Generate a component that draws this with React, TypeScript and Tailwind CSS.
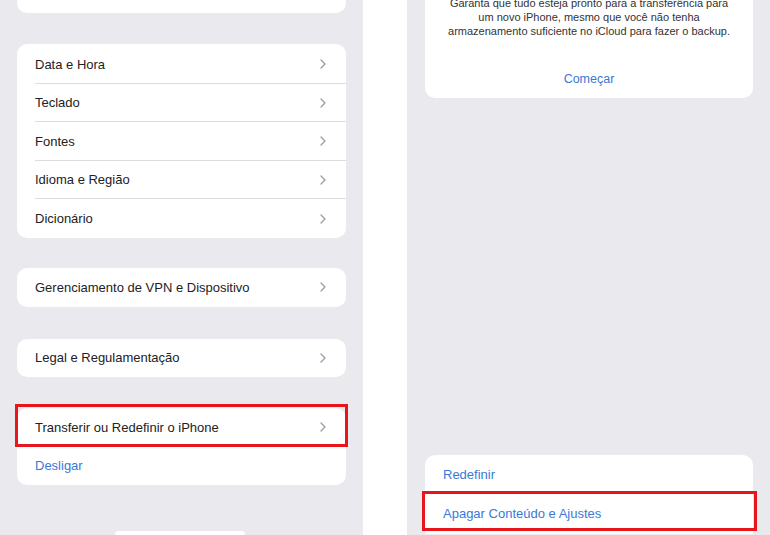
import { ReactNode } from "react";

const font = { fontFamily: '"Liberation Sans", Arial, sans-serif' };

function Chevron() {
  return (
    <svg width="6" height="10" viewBox="0 0 6 10" className="shrink-0">
      <path d="M1 1l4 4-4 4" fill="none" stroke="#9c9ca1" strokeWidth="1.3" strokeLinecap="round" strokeLinejoin="round" />
    </svg>
  );
}

function Row({ label, last, blue, chevron = true, h = "h-[38.6px]" }: { label: string; last?: boolean; blue?: boolean; chevron?: boolean; h?: string }) {
  return (
    <div className={`relative flex items-center justify-between pl-[18px] pr-[20px] ${h}`}>
      <span className={`text-[13px] ${blue ? "text-[#3a79d6]" : "text-[#222224]"}`}>{label}</span>
      {chevron && <Chevron />}
      {!last && <div className="absolute left-[18px] right-0 bottom-0 h-px bg-[#dcdce0]" />}
    </div>
  );
}

function Card({ children, className = "" }: { children: ReactNode; className?: string }) {
  return <div className={`bg-white rounded-[10px] overflow-hidden ${className}`}>{children}</div>;
}

export default function App() {
  return (
    <div style={font} className="flex w-[770px] h-[535px] overflow-hidden bg-white">
      {/* left screen */}
      <div className="w-[363px] h-full bg-[#e9e9ee] flex flex-col px-[17px]">
        <div className="h-[13px] bg-white rounded-b-[10px]" />
        <Card className="mt-[31px] pt-px">
          <Row label="Data e Hora" />
          <Row label="Teclado" />
          <Row label="Fontes" />
          <Row label="Idioma e Região" />
          <Row label="Dicionário" last />
        </Card>
        <Card className="mt-[30px]">
          <Row label="Gerenciamento de VPN e Dispositivo" last h="h-[39px]" />
        </Card>
        <Card className="mt-[32px]">
          <Row label="Legal e Regulamentação" last h="h-[38px]" />
        </Card>
        <div className="relative mt-[31px]">
          <Card>
            <Row label="Transferir ou Redefinir o iPhone" h="h-[39px]" />
            <Row label="Desligar" blue chevron={false} last h="h-[38px]" />
          </Card>
          <div className="absolute left-[-2px] right-[-2px] top-[-4px] h-[43px] border-[3px] border-[#e8151b]" />
        </div>
        <div className="mt-[46px] ml-[98px] w-[130px] h-[4px] bg-white rounded-t-[4px]" />
      </div>

      <div className="w-[44px] h-full bg-white" />

      {/* right screen */}
      <div className="flex-1 h-full bg-[#e9e9ee] flex flex-col pl-[18px] pr-[17px]">
        <div className="bg-white rounded-b-[10px] mt-[-20px] pt-[16px] pb-[12px] text-center">
          <p className="text-[11px] leading-[14px] text-[#333335]">
            Garanta que tudo esteja pronto para a transferência para
            <br />
            um novo iPhone, mesmo que você não tenha
            <br />
            armazenamento suficiente no iCloud para fazer o backup.
          </p>
          <div className="mt-[34px] text-[12.5px] leading-[14px] text-[#3a79d6]">Começar</div>
        </div>
        <div className="relative mt-[357px]">
          <Card className="rounded-b-none">
            <Row label="Redefinir" blue chevron={false} h="h-[39px]" />
            <Row label="Apagar Conteúdo e Ajustes" blue chevron={false} last h="h-[40px]" />
          </Card>
          <div className="absolute left-[-3px] right-[-4px] top-[36px] h-[40px] border-[3px] border-[#e8151b]" />
        </div>
      </div>
    </div>
  );
}
